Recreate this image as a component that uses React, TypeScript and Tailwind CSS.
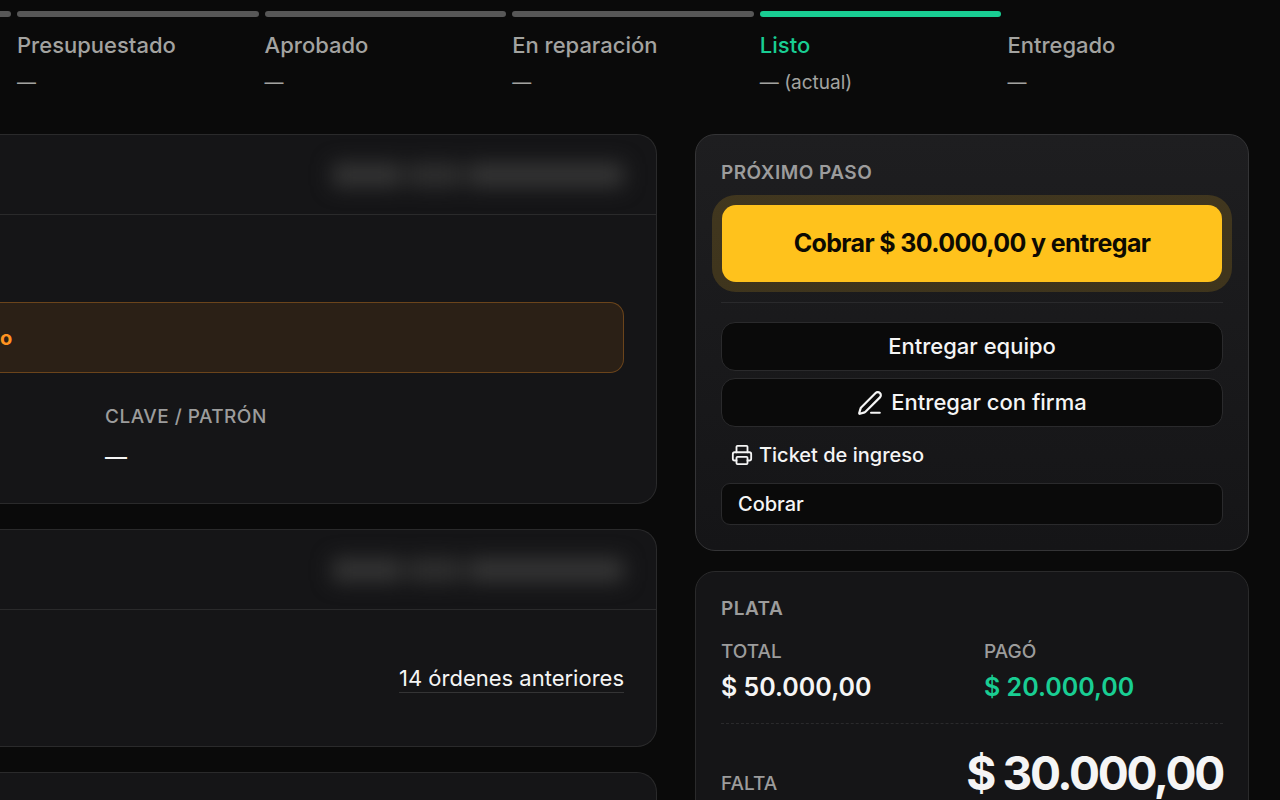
import type { ReactNode } from 'react';
import { PenLine, Printer } from 'lucide-react';
import clsx from 'clsx';

interface Step {
  label: string;
  hint: string;
  status: 'done' | 'current' | 'pending';
}

const steps: Step[] = [
  { label: 'Presupuestado', hint: '—', status: 'done' },
  { label: 'Aprobado', hint: '—', status: 'done' },
  { label: 'En reparación', hint: '—', status: 'done' },
  { label: 'Listo', hint: '— (actual)', status: 'current' },
  { label: 'Entregado', hint: '—', status: 'pending' },
];

function StepItem({ step }: { step: Step }) {
  return (
    <li>
      <div
        className={clsx(
          'h-1.5 rounded-full',
          step.status === 'done' && 'bg-[#575757]',
          step.status === 'current' && 'bg-[#19ce93]'
        )}
      />
      <p
        className={clsx(
          'mt-3.5 text-[22px] leading-7 font-medium',
          step.status === 'current' ? 'text-[#19ce93]' : 'text-[#a3a3a0]'
        )}
      >
        {step.label}
      </p>
      <p className="mt-3 text-[19px] leading-6 text-[#a3a3a0]">{step.hint}</p>
    </li>
  );
}

function SectionLabel({ children, strong }: { children: ReactNode; strong?: boolean }) {
  return (
    <h2
      className={clsx(
        'text-[19px] leading-6 tracking-wide text-[#9c9c9c] uppercase',
        strong ? 'font-semibold' : 'font-medium'
      )}
    >
      {children}
    </h2>
  );
}

// Dato privado: solo se ve la mancha del texto
function HiddenText() {
  return (
    <div aria-hidden="true" className="flex w-[292px] gap-1.5 blur-[10px]">
      <span className="h-6 w-[70px] rounded bg-[#353535]" />
      <span className="h-6 w-[54px] rounded bg-[#303030]" />
      <span className="h-6 flex-1 rounded bg-[#363636]" />
    </div>
  );
}

function DetailCard({ header, children }: { header?: ReactNode; children?: ReactNode }) {
  return (
    <section className="rounded-r-[20px] border border-l-0 border-[#2a2a2b] bg-[#151517]">
      <header className="flex h-20 items-center justify-end border-b border-[#2a2a2b] pr-8">
        {header}
      </header>
      {children}
    </section>
  );
}

export default function App() {
  return (
    <div className="h-screen overflow-hidden bg-[#0a0a0a] pt-[11px] pr-[31px] font-['Inter',sans-serif] text-[#f5f5f5]">
      {/* Progreso de la orden */}
      <ol className="grid grid-cols-[11px_repeat(5,minmax(0,1fr))] gap-1.5">
        <li aria-hidden="true" className="h-1.5 rounded-r-full bg-[#575757]" />
        {steps.map((step) => (
          <StepItem key={step.label} step={step} />
        ))}
      </ol>

      <main className="mt-[39px] grid grid-cols-[minmax(0,1fr)_554px] items-start gap-[38px]">
        <div className="flex flex-col gap-[25px]">
          {/* Equipo */}
          <DetailCard header={<HiddenText />}>
            <div className="pt-[87px] pr-8 pb-8">
              <div className="flex h-[71px] items-center rounded-r-[14px] border border-l-0 border-[#6b441b] bg-[#2b2016]">
                <span className="text-[20px] font-bold text-[#ff9320]">o</span>
              </div>
              <div className="mt-8 pl-[105px]">
                <SectionLabel>Clave / Patrón</SectionLabel>
                <p className="mt-3.5 text-[22px] leading-7 font-medium">—</p>
              </div>
            </div>
          </DetailCard>

          {/* Cliente */}
          <DetailCard header={<HiddenText />}>
            <div className="flex justify-end pt-[54px] pr-8 pb-[53px]">
              <a href="#ordenes" className="border-b border-[#343435] text-[22px] leading-7">
                14 órdenes anteriores
              </a>
            </div>
          </DetailCard>

          <DetailCard />
        </div>

        <aside className="flex flex-col gap-5">
          <section className="rounded-[20px] border border-[#343436] bg-linear-to-b from-[#1e1e20] to-[#151517] px-[25px] pt-[26px] pb-[25px]">
            <SectionLabel strong>Próximo paso</SectionLabel>
            <div className="px-px pt-5">
              <button
                type="button"
                className="h-[77px] w-full rounded-[14px] bg-[#ffc21c] text-[25px] font-bold tracking-tight text-[#0d0a02] ring-10 ring-[#ffc21c]/16"
              >
                Cobrar $ 30.000,00 y entregar
              </button>
            </div>
            <hr className="mt-5 border-[#2a2a2c]" />
            <div className="mt-[19px] flex flex-col gap-[7px]">
              <button
                type="button"
                className="h-[49px] rounded-[14px] border border-[#2a2a2c] bg-[#0a0a0a] text-[22px] font-medium"
              >
                Entregar equipo
              </button>
              <button
                type="button"
                className="flex h-[49px] items-center justify-center gap-2 rounded-[14px] border border-[#2a2a2c] bg-[#0a0a0a] text-[22px] font-medium"
              >
                <PenLine size={26} strokeWidth={2} />
                Entregar con firma
              </button>
              <button type="button" className="flex h-[42px] items-center gap-1.5 px-2.5 text-[20px] font-medium">
                <Printer size={22} strokeWidth={2} />
                Ticket de ingreso
              </button>
              <button
                type="button"
                className="h-[42px] rounded-[9px] border border-[#2a2a2c] bg-[#0a0a0a] px-4 text-left text-[20px] font-medium"
              >
                Cobrar
              </button>
            </div>
          </section>

          <section className="rounded-[20px] border border-[#2a2a2b] bg-[#151517] p-[25px]">
            <SectionLabel strong>Plata</SectionLabel>
            <dl>
              <div className="mt-[19px] grid grid-cols-2 gap-6">
                <div>
                  <dt className="text-[19px] leading-6 font-medium text-[#9c9c9c]">TOTAL</dt>
                  <dd className="mt-2 text-[25px] leading-[30px] font-semibold">$ 50.000,00</dd>
                </div>
                <div>
                  <dt className="text-[19px] leading-6 font-medium text-[#9c9c9c]">PAGÓ</dt>
                  <dd className="mt-2 text-[25px] leading-[30px] font-semibold text-[#19ce93]">$ 20.000,00</dd>
                </div>
              </div>
              <div className="mt-[21px] flex items-baseline justify-between border-t border-dashed border-[#2a2a2c] pt-[26px]">
                <dt className="text-[19px] leading-6 font-medium text-[#9c9c9c]">FALTA</dt>
                <dd className="text-[46px] leading-[46px] font-bold tracking-tighter">$ 30.000,00</dd>
              </div>
            </dl>
          </section>
        </aside>
      </main>
    </div>
  );
}
